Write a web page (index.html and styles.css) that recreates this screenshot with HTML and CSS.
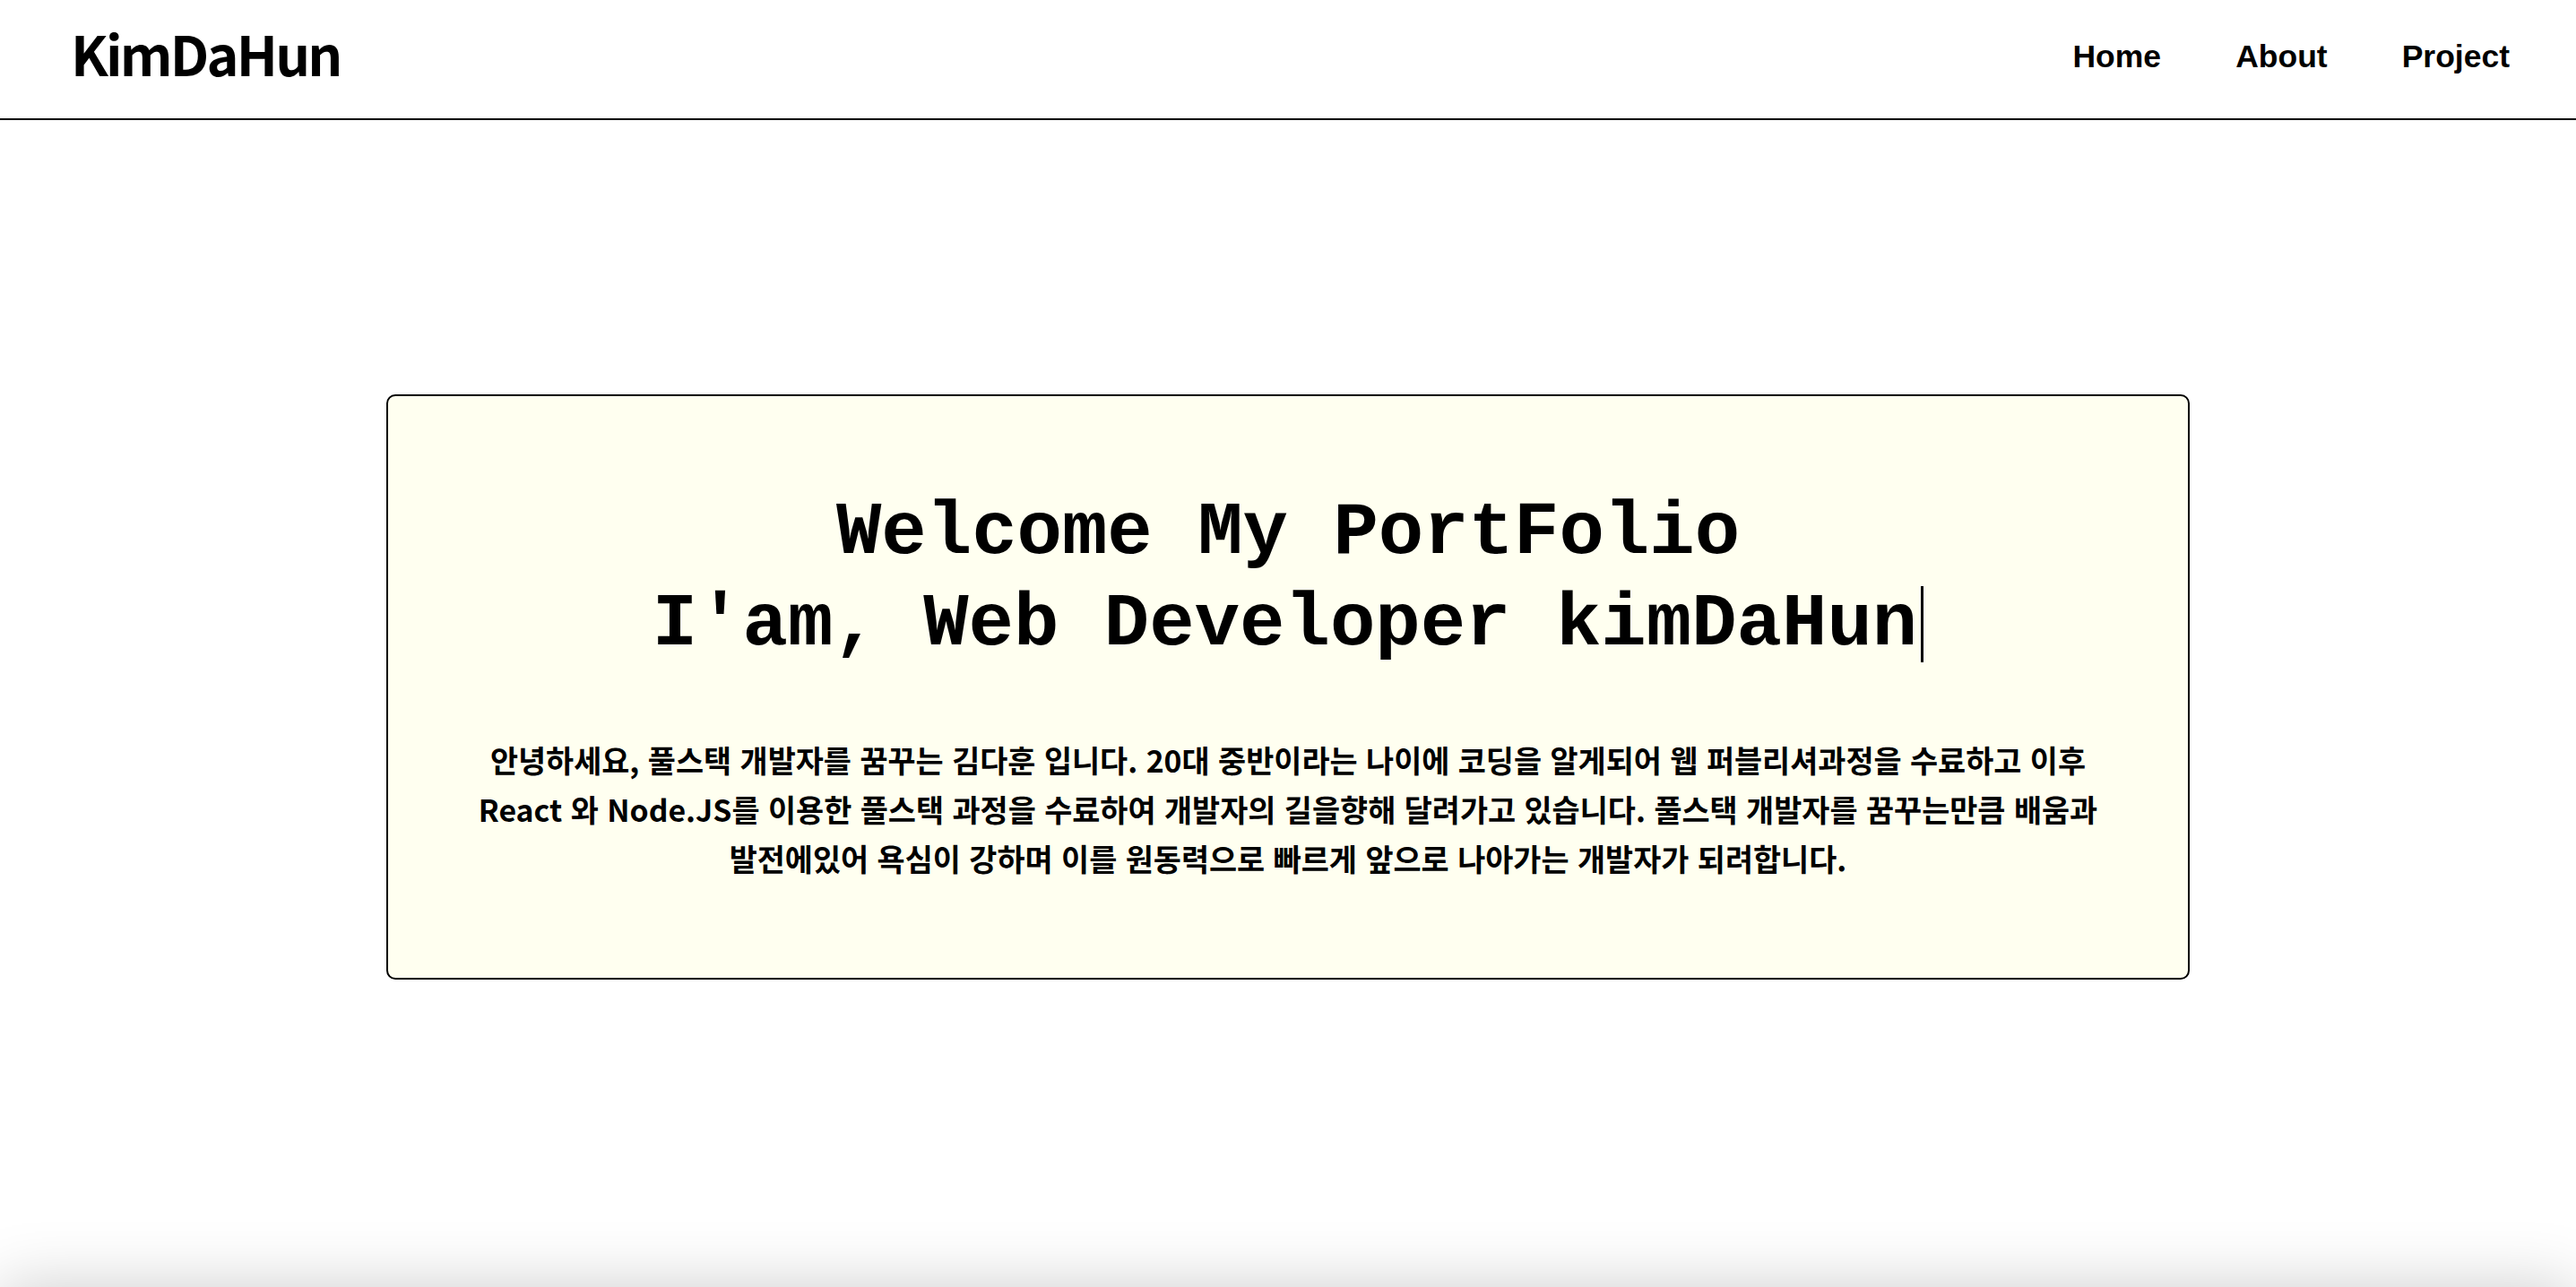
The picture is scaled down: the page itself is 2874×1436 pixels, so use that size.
FILE: index.html
```html
<!DOCTYPE html>
<html lang="ko">
<head>
<meta charset="utf-8">
<title>KimDaHun Portfolio</title>
<link rel="stylesheet" href="styles.css">
</head>
<body>
<header class="header">
  <a class="logo" href="#">KimDaHun</a>
  <nav class="nav">
    <a class="nav-link" href="#">Home</a>
    <a class="nav-link" href="#">About</a>
    <a class="nav-link" href="#">Project</a>
  </nav>
</header>
<main class="hero">
  <section class="card">
    <h1 class="title">Welcome My PortFolio<br>I'am, Web Developer kimDaHun<span class="caret"></span></h1>
    <p class="intro">안녕하세요, 풀스택 개발자를 꿈꾸는 김다훈 입니다. 20대 중반이라는 나이에 코딩을 알게되어 웹 퍼블리셔과정을 수료하고 이후<br>React 와 Node.JS를 이용한 풀스택 과정을 수료하여 개발자의 길을향해 달려가고 있습니다. 풀스택 개발자를 꿈꾸는만큼 배움과<br>발전에있어 욕심이 강하며 이를 원동력으로 빠르게 앞으로 나아가는 개발자가 되려합니다.</p>
  </section>
</main>
<section class="next"></section>
</body>
</html>
```
FILE: styles.css
```css
* { box-sizing: border-box; }
html, body { margin: 0; padding: 0; background: #fff; color: #000; }
body { font-family: "Noto Sans CJK KR", "Noto Sans", sans-serif; }

.header {
  height: 134px;
  border-bottom: 2px solid #000;
  display: flex;
  align-items: center;
  justify-content: space-between;
  padding: 0 74px 16px 79px;
}
.logo {
  font-family: "Noto Sans CJK KR", "Noto Sans", sans-serif;
  font-weight: 700;
  font-size: 61px;
  letter-spacing: -2.8px;
  color: #000;
  text-decoration: none;
  line-height: 1;
}
.nav { display: flex; gap: 83px; padding-top: 11px; }
.nav-link {
  font-family: "Liberation Sans", Arial, sans-serif;
  font-weight: 700;
  font-size: 35.5px;
  color: #000;
  text-decoration: none;
}

.hero {
  height: 1302px;
  padding-top: 306px;
  display: flex;
  justify-content: center;
  align-items: flex-start;
}
.card {
  width: 70%;
  background: #fffff0;
  border: 2px solid #000;
  border-radius: 10px;
  padding: 102px 40px 106px;
  text-align: center;
}
.title {
  margin: 0 0 72px;
  font-family: "Liberation Mono", "Courier New", monospace;
  font-weight: 700;
  font-size: 84px;
  line-height: 102px;
}
.caret {
  display: inline-block;
  width: 3px;
  height: 85px;
  margin-left: 4px;
  background: #000;
  vertical-align: -20px;
}
.intro {
  margin: 0;
  font-family: "Noto Sans CJK KR", sans-serif;
  font-weight: 700;
  font-size: 33.8px;
  line-height: 55px;
}

.next {
  height: 600px;
  background: #fff;
  box-shadow: 0 0 70px rgba(0, 0, 0, 0.2);
}
```
